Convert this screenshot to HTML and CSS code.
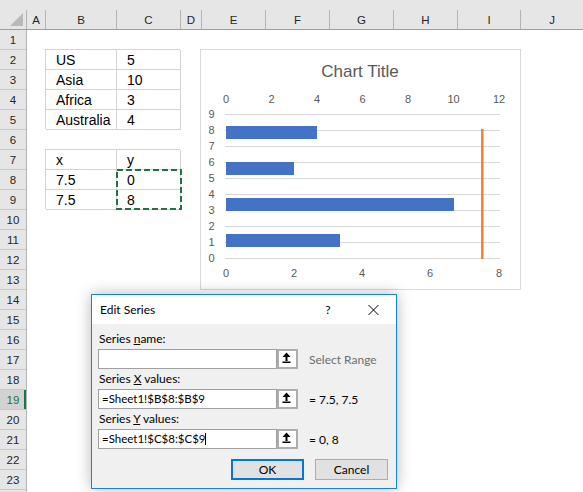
FILE: index.html
```html
<!DOCTYPE html>
<html>
<head>
<meta charset="utf-8">
<title>Edit Series</title>
<link rel="stylesheet" href="styles.css">
</head>
<body>
<div class="sheet">
  <div class="topband"></div>
  <div class="colheads">
    <div class="ch corner"><span class="tri"></span></div>
    <div class="ch">A</div>
    <div class="ch">B</div>
    <div class="ch">C</div>
    <div class="ch">D</div>
    <div class="ch">E</div>
    <div class="ch">F</div>
    <div class="ch">G</div>
    <div class="ch">H</div>
    <div class="ch">I</div>
    <div class="ch last">J</div>
  </div>
  <div class="main">
    <div class="rowheads">
      <div class="rh">1</div>
      <div class="rh">2</div>
      <div class="rh">3</div>
      <div class="rh">4</div>
      <div class="rh">5</div>
      <div class="rh">6</div>
      <div class="rh">7</div>
      <div class="rh">8</div>
      <div class="rh">9</div>
      <div class="rh">10</div>
      <div class="rh">11</div>
      <div class="rh">12</div>
      <div class="rh">13</div>
      <div class="rh">14</div>
      <div class="rh">15</div>
      <div class="rh">16</div>
      <div class="rh">17</div>
      <div class="rh">18</div>
      <div class="rh sel">19</div>
      <div class="rh">20</div>
      <div class="rh">21</div>
      <div class="rh">22</div>
      <div class="rh">23</div>
      <div class="rh"></div>
    </div>
    <div class="cells">
      <div class="c r2 cb">US</div>
      <div class="c r2 cc">5</div>
      <div class="c r3 cb">Asia</div>
      <div class="c r3 cc">10</div>
      <div class="c r4 cb">Africa</div>
      <div class="c r4 cc">3</div>
      <div class="c r5 cb">Australia</div>
      <div class="c r5 cc">4</div>
      <div class="c r7 cb">x</div>
      <div class="c r7 cc">y</div>
      <div class="c r8 cb">7.5</div>
      <div class="c r8 cc">0</div>
      <div class="c r9 cb">7.5</div>
      <div class="c r9 cc">8</div>
      <div class="ants">
        <svg class="ants-svg" width="66" height="41" viewBox="0 0 66 41">
          <rect x="1" y="1" width="64" height="39" fill="none" stroke="#217346" stroke-width="2" stroke-dasharray="6 3"/>
        </svg>
      </div>
    </div>
  </div>

  <div class="chart">
    <svg width="319" height="239" viewBox="0 0 319 239">
      <text class="ctitle" x="159" y="27">Chart Title</text>
      <g class="grid">
        <line x1="24" x2="299" y1="64.5" y2="64.5"/>
        <line x1="24" x2="299" y1="80.5" y2="80.5"/>
        <line x1="24" x2="299" y1="96.5" y2="96.5"/>
        <line x1="24" x2="299" y1="112.5" y2="112.5"/>
        <line x1="24" x2="299" y1="128.5" y2="128.5"/>
        <line x1="24" x2="299" y1="144.5" y2="144.5"/>
        <line x1="24" x2="299" y1="160.5" y2="160.5"/>
        <line x1="24" x2="299" y1="176.5" y2="176.5"/>
        <line x1="24" x2="299" y1="192.5" y2="192.5"/>
        <line x1="24" x2="299" y1="208.5" y2="208.5"/>
      </g>
      <g class="ax">
        <text x="25" y="53">0</text>
        <text x="70.5" y="53">2</text>
        <text x="116" y="53">4</text>
        <text x="161.5" y="53">6</text>
        <text x="207" y="53">8</text>
        <text x="252.5" y="53">10</text>
        <text x="298" y="53">12</text>

        <text x="10.5" y="68">9</text>
        <text x="10.5" y="84">8</text>
        <text x="10.5" y="100">7</text>
        <text x="10.5" y="116">6</text>
        <text x="10.5" y="132">5</text>
        <text x="10.5" y="148">4</text>
        <text x="10.5" y="164">3</text>
        <text x="10.5" y="180">2</text>
        <text x="10.5" y="196">1</text>
        <text x="10.5" y="212">0</text>

        <text x="25" y="227">0</text>
        <text x="93" y="227">2</text>
        <text x="161" y="227">4</text>
        <text x="229" y="227">6</text>
        <text x="298" y="227">8</text>
      </g>
      <g class="bars">
        <rect x="25" y="76" width="91" height="13"/>
        <rect x="25" y="112" width="68" height="13"/>
        <rect x="25" y="148" width="228" height="13"/>
        <rect x="25" y="184" width="114" height="13"/>
      </g>
      <line class="vline" x1="281.3" x2="281.3" y1="79" y2="209"/>
    </svg>
  </div>

  <div class="dialog">
    <div class="dtitle">
      <span class="dt">Edit Series</span>
      <span class="help">?</span>
      <span class="close">
        <svg width="11" height="10" viewBox="0 0 11 10">
          <line x1="0.5" y1="0" x2="10.5" y2="10" stroke="#000" stroke-width="1"/>
          <line x1="10.5" y1="0" x2="0.5" y2="10" stroke="#000" stroke-width="1"/>
        </svg>
      </span>
    </div>
    <div class="dbody">
      <div class="lbl">Series <u>n</u>ame:</div>
      <div class="frow">
        <div class="inp"></div>
        <div class="rbtn"><svg width="17" height="16" viewBox="0 0 17 16"><path d="M7.5 1.5 L11.5 6 L3.5 6 Z M6.5 6 H8.5 V10 H6.5 Z M3.5 10.5 H11.5 V12 H3.5 Z" fill="#000"/></svg></div>
        <span class="val gray">Select Range</span>
      </div>
      <div class="lbl">Series <u>X</u> values:</div>
      <div class="frow">
        <div class="inp">=Sheet1!$B$8:$B$9</div>
        <div class="rbtn"><svg width="17" height="16" viewBox="0 0 17 16"><path d="M7.5 1.5 L11.5 6 L3.5 6 Z M6.5 6 H8.5 V10 H6.5 Z M3.5 10.5 H11.5 V12 H3.5 Z" fill="#000"/></svg></div>
        <span class="val">= 7.5, 7.5</span>
      </div>
      <div class="lbl">Series <u>Y</u> values:</div>
      <div class="frow">
        <div class="inp">=Sheet1!$C$8:$C$9<span class="caret"></span></div>
        <div class="rbtn"><svg width="17" height="16" viewBox="0 0 17 16"><path d="M7.5 1.5 L11.5 6 L3.5 6 Z M6.5 6 H8.5 V10 H6.5 Z M3.5 10.5 H11.5 V12 H3.5 Z" fill="#000"/></svg></div>
        <span class="val">= 0, 8</span>
      </div>
      <div class="btns">
        <div class="btn ok">OK</div>
        <div class="btn cancel">Cancel</div>
      </div>
    </div>
  </div>
</div>
</body>
</html>
```

FILE: styles.css
```css
* { box-sizing: border-box; }
html, body { margin: 0; padding: 0; }
body {
  width: 583px;
  height: 492px;
  overflow: hidden;
  background: #fff;
  font-family: "Liberation Sans", Arial, sans-serif;
}
.sheet {
  position: relative;
  width: 583px;
  height: 492px;
  overflow: hidden;
}
.topband {
  height: 10px;
  background: #e6e6e6;
}
.colheads {
  display: grid;
  grid-template-columns: 27px 19px 71px 64px 21px 64px 64px 64px 64px 63px 1fr;
  height: 20px;
  background: #e6e6e6;
  border-bottom: 1px solid #9e9e9e;
}
.ch {
  border-right: 1px solid #b4b4b4;
  display: flex;
  align-items: center;
  justify-content: center;
  font-size: 11.5px;
  color: #262626;
}
.ch.last { border-right: none; }
.corner { position: relative; }
.tri {
  position: absolute;
  right: 3px;
  bottom: 3px;
  width: 0;
  height: 0;
  border-left: 13px solid transparent;
  border-bottom: 13px solid #b9b9b9;
}
.main { display: flex; }
.rowheads {
  width: 27px;
  flex: none;
  background: #e6e6e6;
  border-right: 1px solid #b4b4b4;
}
.rh {
  height: 20px;
  border-bottom: 1px solid #c8c8c8;
  display: flex;
  align-items: center;
  justify-content: center;
  font-size: 11.5px;
  color: #262626;
}
.rh.sel {
  background: #d2d2d2;
  color: #217346;
  box-shadow: inset -2px 0 0 #217346;
}
.cells {
  flex: 1;
  display: grid;
  grid-template-columns: 19px 71px 64px 21px 64px 64px 64px 64px 63px 1fr;
  grid-template-rows: repeat(24, 20px);
}
.c {
  display: flex;
  align-items: center;
  padding-left: 10px;
  font-size: 14px;
  color: #000;
  box-shadow: inset -1px -1px 0 #d4d4d4, -1px -1px 0 #d4d4d4;
}
.r2 { grid-row: 2; }
.r3 { grid-row: 3; }
.r4 { grid-row: 4; }
.r5 { grid-row: 5; }
.r7 { grid-row: 7; }
.r8 { grid-row: 8; }
.r9 { grid-row: 9; }
.cb { grid-column: 2; }
.cc { grid-column: 3; }
.ants {
  grid-row: 8 / 10;
  grid-column: 3;
  position: relative;
}
.ants-svg {
  position: absolute;
  left: -1px;
  top: -1px;
}

/* chart */
.chart {
  position: absolute;
  left: 200px;
  top: 49px;
  width: 321px;
  height: 241px;
  border: 1px solid #d9d9d9;
  background: #fff;
}
.chart svg { display: block; }
.ctitle {
  font-family: "Liberation Sans", Arial, sans-serif;
  font-size: 17px;
  fill: #595959;
  text-anchor: middle;
}
.grid line { stroke: #d9d9d9; stroke-width: 1; }
.ax text {
  font-family: "Liberation Sans", Arial, sans-serif;
  font-size: 11px;
  fill: #595959;
  text-anchor: middle;
}
.bars rect { fill: #4472c4; }
.vline { stroke: #ed7d31; stroke-width: 2.4; }

/* dialog */
.dialog {
  position: absolute;
  left: 91px;
  top: 294px;
  width: 306px;
  height: 195px;
  border: 1px solid #1883d7;
  background: #f0f0f0;
  box-shadow: 0 0 14px rgba(0, 0, 0, 0.28);
  font-family: Lato, "Liberation Sans", sans-serif;
  font-size: 12px;
  color: #000;
}
.dtitle {
  height: 29px;
  background: #fff;
  display: flex;
  align-items: center;
  padding-left: 8px;
}
.dt { flex: 1; font-size: 12px; }
.help {
  width: 24px;
  text-align: center;
  font-size: 12px;
  margin-right: 10px;
}
.close {
  width: 46px;
  height: 29px;
  display: flex;
  align-items: center;
  justify-content: center;
}
.close svg { display: block; }
.dbody {
  padding: 5px 7px 0 6px;
}
.lbl {
  height: 20px;
  line-height: 20px;
  padding-left: 1px;
}
.frow {
  height: 20px;
  display: flex;
  align-items: center;
}
.inp {
  width: 179px;
  height: 20px;
  border: 1px solid #a0a0a0;
  background: #fff;
  padding-left: 3px;
  line-height: 18px;
  font-size: 11.5px;
  white-space: nowrap;
}
.caret {
  display: inline-block;
  width: 1px;
  height: 12px;
  background: #000;
  vertical-align: -2px;
}
.rbtn {
  width: 21px;
  height: 20px;
  border: 2px solid #adadad;
  background: #fff;
  display: flex;
  align-items: center;
  justify-content: center;
}
.rbtn svg { display: block; }
.val {
  margin-left: 11px;
  white-space: nowrap;
}
.val.gray { color: #6d6d6d; }
.btns {
  display: flex;
  justify-content: flex-end;
  gap: 11px;
  margin-top: 10px;
  padding-right: 1px;
}
.btn {
  width: 73px;
  height: 21px;
  background: #e1e1e1;
  display: flex;
  align-items: center;
  justify-content: center;
  font-size: 12px;
}
.btn.ok { border: 2px solid #0078d7; }
.btn.cancel { border: 1px solid #adadad; }
```
